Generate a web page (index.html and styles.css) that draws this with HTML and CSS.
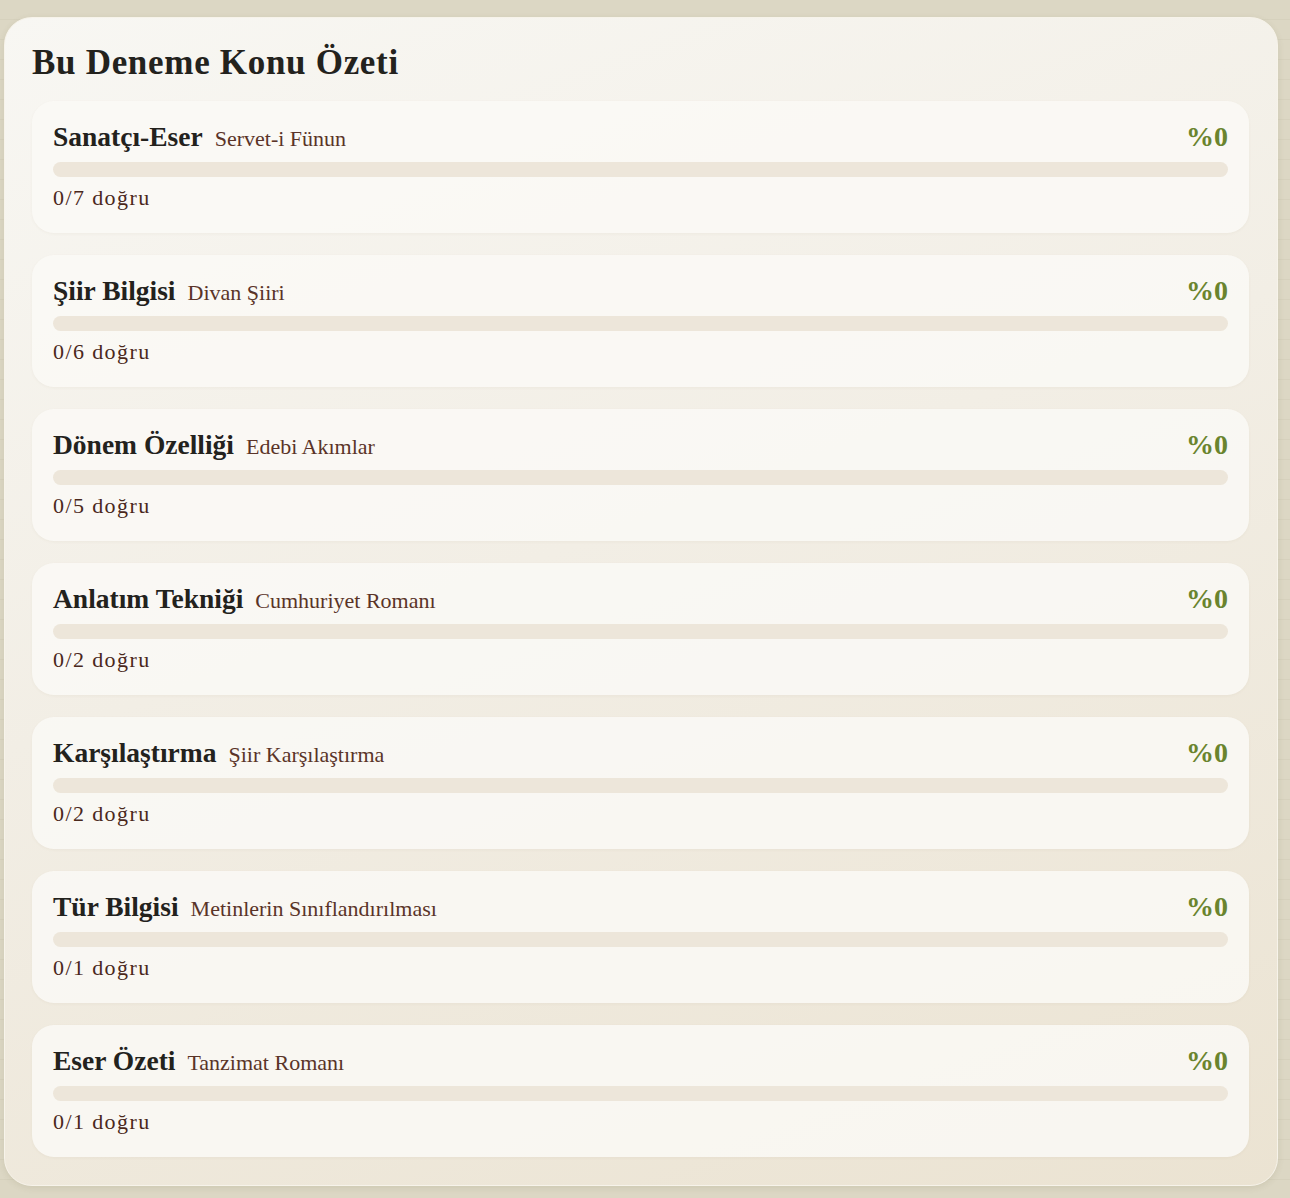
FILE: index.html
```html
<!DOCTYPE html>
<html lang="tr">
<head>
<meta charset="utf-8">
<title>Bu Deneme Konu Özeti</title>
<link rel="stylesheet" href="styles.css">
</head>
<body>
<section class="panel">
  <h2 class="panel-title">Bu Deneme Konu Özeti</h2>
  <div class="list">
    <div class="topic">
      <div class="topic-head">
        <div class="topic-names"><span class="topic-name">Sanatçı-Eser</span><span class="topic-sub">Servet-i Fünun</span></div>
        <span class="topic-pct">%0</span>
      </div>
      <div class="bar"><div class="bar-fill" style="width:0%"></div></div>
      <div class="topic-count">0/7 doğru</div>
    </div>
    <div class="topic">
      <div class="topic-head">
        <div class="topic-names"><span class="topic-name">Şiir Bilgisi</span><span class="topic-sub">Divan Şiiri</span></div>
        <span class="topic-pct">%0</span>
      </div>
      <div class="bar"><div class="bar-fill" style="width:0%"></div></div>
      <div class="topic-count">0/6 doğru</div>
    </div>
    <div class="topic">
      <div class="topic-head">
        <div class="topic-names"><span class="topic-name">Dönem Özelliği</span><span class="topic-sub">Edebi Akımlar</span></div>
        <span class="topic-pct">%0</span>
      </div>
      <div class="bar"><div class="bar-fill" style="width:0%"></div></div>
      <div class="topic-count">0/5 doğru</div>
    </div>
    <div class="topic">
      <div class="topic-head">
        <div class="topic-names"><span class="topic-name">Anlatım Tekniği</span><span class="topic-sub">Cumhuriyet Romanı</span></div>
        <span class="topic-pct">%0</span>
      </div>
      <div class="bar"><div class="bar-fill" style="width:0%"></div></div>
      <div class="topic-count">0/2 doğru</div>
    </div>
    <div class="topic">
      <div class="topic-head">
        <div class="topic-names"><span class="topic-name">Karşılaştırma</span><span class="topic-sub">Şiir Karşılaştırma</span></div>
        <span class="topic-pct">%0</span>
      </div>
      <div class="bar"><div class="bar-fill" style="width:0%"></div></div>
      <div class="topic-count">0/2 doğru</div>
    </div>
    <div class="topic">
      <div class="topic-head">
        <div class="topic-names"><span class="topic-name">Tür Bilgisi</span><span class="topic-sub">Metinlerin Sınıflandırılması</span></div>
        <span class="topic-pct">%0</span>
      </div>
      <div class="bar"><div class="bar-fill" style="width:0%"></div></div>
      <div class="topic-count">0/1 doğru</div>
    </div>
    <div class="topic">
      <div class="topic-head">
        <div class="topic-names"><span class="topic-name">Eser Özeti</span><span class="topic-sub">Tanzimat Romanı</span></div>
        <span class="topic-pct">%0</span>
      </div>
      <div class="bar"><div class="bar-fill" style="width:0%"></div></div>
      <div class="topic-count">0/1 doğru</div>
    </div>
  </div>
</section>
</body>
</html>
```

FILE: styles.css
```css
html, body {
  margin: 0;
  padding: 0;
}

body {
  min-height: 1198px;
  box-sizing: border-box;
  padding: 17px 12px 13px 4px;
  background-color: #dcd7c4;
  background-image: repeating-linear-gradient(to bottom, rgba(0,0,0,0) 0, rgba(0,0,0,0) 19px, rgba(120,110,80,0.06) 19px, rgba(120,110,80,0.06) 20px);
  font-family: "Liberation Serif", "Times New Roman", serif;
}

.panel {
  border-radius: 28px;
  padding: 26px 28px 28px 27px;
  background: linear-gradient(160deg, #f8f7f3 0%, #f2eee5 45%, #ebe3d2 100%);
  border: 1px solid #f7f3ea;
  box-shadow: 0 2px 6px rgba(110, 95, 60, 0.12);
}

.panel-title {
  margin: 0 0 19px;
  font-family: "Liberation Serif", serif;
  font-weight: 700;
  font-size: 35px;
  letter-spacing: 0.7px;
  line-height: 38px;
  color: #23221d;
}

.list {
  display: flex;
  flex-direction: column;
  gap: 22px;
}

.topic {
  border-radius: 22px;
  padding: 19px 21px 22px;
  background: rgba(250, 249, 246, 0.85);
  box-shadow: 0 1px 3px rgba(140, 120, 80, 0.06);
}

.topic-head {
  display: flex;
  align-items: center;
  justify-content: space-between;
  height: 34px;
}

.topic-names {
  display: flex;
  align-items: baseline;
  gap: 12px;
}

.topic-name {
  font-weight: 700;
  font-size: 27.5px;
  color: #23221d;
}

.topic-sub {
  font-size: 22px;
  color: #5a3428;
}

.topic-pct {
  font-weight: 700;
  font-size: 28px;
  color: #6a842e;
  line-height: 34px;
}

.bar {
  margin-top: 8px;
  height: 15px;
  border-radius: 8px;
  background: #ede6da;
  overflow: hidden;
}

.bar-fill {
  height: 100%;
  background: #6a842e;
}

.topic-count {
  margin-top: 8px;
  font-size: 22px;
  letter-spacing: 1.4px;
  line-height: 26px;
  color: #4a281c;
}
```
